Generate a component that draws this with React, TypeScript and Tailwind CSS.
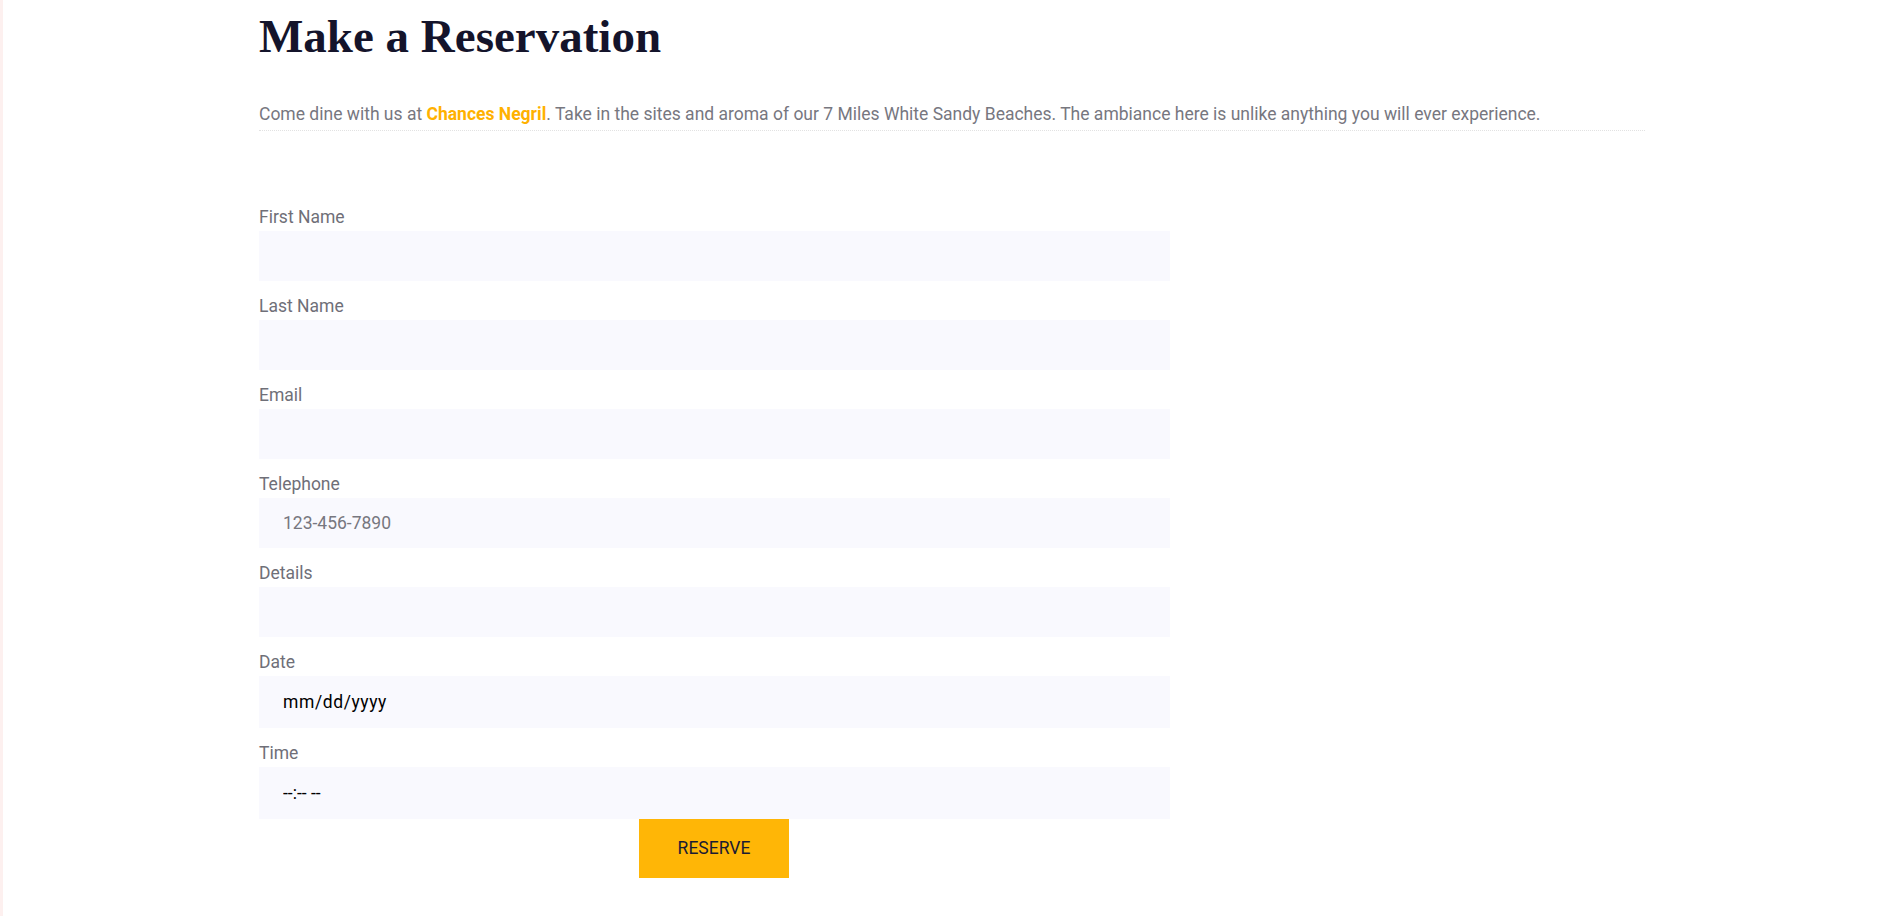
const fields = [
  { label: "First Name", type: "text", placeholder: "" },
  { label: "Last Name", type: "text", placeholder: "" },
  { label: "Email", type: "email", placeholder: "" },
  { label: "Telephone", type: "tel", placeholder: "123-456-7890" },
  { label: "Details", type: "text", placeholder: "" },
];

const Field = ({ label, type, placeholder }: { label: string; type: string; placeholder: string }) => (
  <label className="flex flex-col">
    <span className="text-[17.5px] leading-[27px] text-[#6f6f78]">{label}</span>
    <input
      type={type}
      placeholder={placeholder}
      className="h-[50px] w-full bg-[#f9f9fe] px-6 text-[17.5px] text-[#333] outline-none placeholder:text-[#77777f]"
    />
  </label>
);

// date / time shown as the browser's empty masks
const MaskField = ({ label, mask, wide }: { label: string; mask: string; wide?: boolean }) => (
  <label className="flex flex-col">
    <span className="text-[17.5px] leading-[27px] text-[#6f6f78]">{label}</span>
    <input
      type="text"
      placeholder={mask}
      className={
        wide
          ? "h-[52px] w-full bg-[#f9f9fe] px-6 text-[17.5px] tracking-[0.6px] text-black outline-none placeholder:text-black"
          : "h-[52px] w-full bg-[#f9f9fe] px-6 text-[17.5px] text-black outline-none placeholder:text-black"
      }
    />
  </label>
);

export default function App() {
  return (
    <div className="flex min-h-screen bg-white font-['Roboto',sans-serif]">
      <div className="w-[3px] shrink-0 bg-[#fdf0ef]" />
      <main className="w-[1386px] pl-[256px] box-content">
        <h1 className="pt-[8px] font-['Liberation_Serif',serif] text-[47px] font-bold leading-[56px] text-[#14142b]">
          Make a Reservation
        </h1>
        <p className="mt-[37px] border-b border-dotted border-[#e2e2e2] pb-[2px] text-[17.5px] leading-[27px] text-[#77777f]">
          Come dine with us at <span className="font-bold text-[#ffb100]">Chances Negril</span>. Take in the sites and aroma of our 7 Miles White Sandy Beaches. The ambiance here is unlike anything you will ever experience.
        </p>

        <form className="mt-[73px] flex w-[911px] flex-col" onSubmit={(e) => e.preventDefault()}>
          <div className="flex flex-col gap-3">
            {fields.map((f) => (
              <Field key={f.label} {...f} />
            ))}
            <MaskField label="Date" mask="mm/dd/yyyy" wide />
            <MaskField label="Time" mask="--:-- --" />
          </div>
          <button
            type="submit"
            className="ml-[380px] h-[59px] w-[150px] bg-[#ffb606] text-[17.5px] text-[#1b1b33]"
          >
            RESERVE
          </button>
        </form>
      </main>
    </div>
  );
}
